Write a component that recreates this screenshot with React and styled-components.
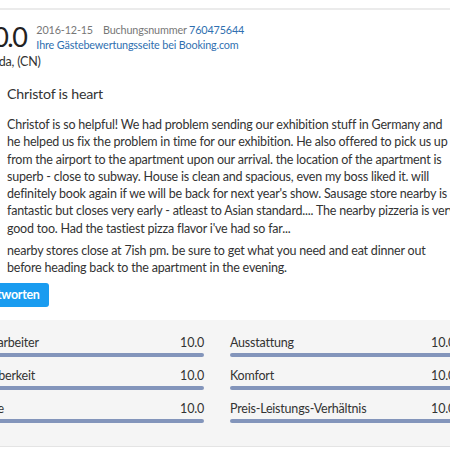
import React from 'react';
import styled, { createGlobalStyle } from 'styled-components';

const GlobalStyle = createGlobalStyle`
  body {
    margin: 0;
    background: #fff;
    font-family: Lato, "Noto Sans", sans-serif;
    color: #333;
    letter-spacing: -0.2px;
    overflow: hidden;
  }
`;

const TopRule = styled.div`
  margin-top: 8px;
  height: 2px;
  background: #ebebeb;
`;

const Card = styled.div`
  margin-left: -21px;
  width: 476px;
`;

const Header = styled.div`
  display: flex;
  align-items: flex-start;
  gap: 10px;
  padding: 11px 0 0 0;
`;

const Score = styled.div`
  font-size: 27px;
  line-height: 32px;
  letter-spacing: -1.5px;
  color: #222;
`;

const Meta = styled.div`
  display: flex;
  flex-direction: column;
  font-size: 10.8px;
  line-height: 15px;
  letter-spacing: -0.15px;
  padding-top: 1px;
  color: #777;
`;

const MetaRow = styled.div`
  display: flex;
  gap: 10px;
`;

const Link = styled.a`
  color: #2f6fb0;
  text-decoration: none;
`;

const Reviewer = styled.div`
  font-size: 12.5px;
  line-height: 18px;
  padding-left: 4px;
`;

const Body = styled.div`
  padding: 12px 0 0 28px;
`;

const Title = styled.h2`
  margin: 0 0 11px;
  font-size: 14.2px;
  font-weight: 400;
  line-height: 22px;
`;

const Paragraph = styled.p`
  margin: 0 0 5px;
  font-size: 12.5px;
  line-height: 17.3px;
`;

const Button = styled.button`
  display: block;
  margin: 6px 0 0 -46px;
  height: 24px;
  padding: 0 9px;
  border: none;
  border-radius: 3px;
  background: #1a9cf0;
  color: #fff;
  font-family: inherit;
  font-size: 12.5px;
  font-weight: 700;
  letter-spacing: -0.3px;
`;

const Ratings = styled.div`
  margin-top: 13px;
  background: #f5f5f5;
  padding: 14px 0 23px;
  border-bottom: 1px solid #e4e4e4;
  display: grid;
  grid-template-columns: 225px 225px;
  column-gap: 26px;
  row-gap: 10px;
`;

const Rating = styled.div`
  display: flex;
  flex-direction: column;
  gap: 2px;
`;

const RatingHead = styled.div`
  display: flex;
  justify-content: space-between;
  font-size: 12.5px;
  line-height: 17px;
`;

const Bar = styled.div`
  height: 4px;
  border-radius: 2px;
  background: #8395bb;
`;

const ratings = [
  ['Mitarbeiter', 'Ausstattung'],
  ['Sauberkeit', 'Komfort'],
  ['Lage', 'Preis-Leistungs-Verhältnis'],
].flat();

export default function App() {
  return (
    <>
      <GlobalStyle />
      <TopRule />
      <Card>
        <Header>
          <Score>10.0</Score>
          <Meta>
            <MetaRow>
              <span>2016-12-15</span>
              <span>
                Buchungsnummer <Link>760475644</Link>
              </span>
            </MetaRow>
            <Link>Ihre Gästebewertungsseite bei Booking.com</Link>
          </Meta>
        </Header>
        <Reviewer>Linda, (CN)</Reviewer>
        <Body>
          <Title>Christof is heart</Title>
          <Paragraph>
            Christof is so helpful! We had problem sending our exhibition stuff in Germany and he helped us fix the
            problem in time for our exhibition. He also offered to pick us up from the airport to the apartment upon
            our arrival. the location of the apartment is superb - close to subway. House is clean and spacious, even
            my boss liked it. will definitely book again if we will be back for next year's show. Sausage store nearby
            is fantastic but closes very early - atleast to Asian standard.... The nearby pizzeria is very good too.
            Had the tastiest pizza flavor i've had so far...
          </Paragraph>
          <Paragraph>
            nearby stores close at 7ish pm. be sure to get what you need and eat dinner out before heading back to the
            apartment in the evening.
          </Paragraph>
          <Button>Beantworten</Button>
        </Body>
        <Ratings>
          {ratings.map((name) => (
            <Rating key={name}>
              <RatingHead>
                <span>{name}</span>
                <span>10.0</span>
              </RatingHead>
              <Bar />
            </Rating>
          ))}
        </Ratings>
      </Card>
    </>
  );
}
